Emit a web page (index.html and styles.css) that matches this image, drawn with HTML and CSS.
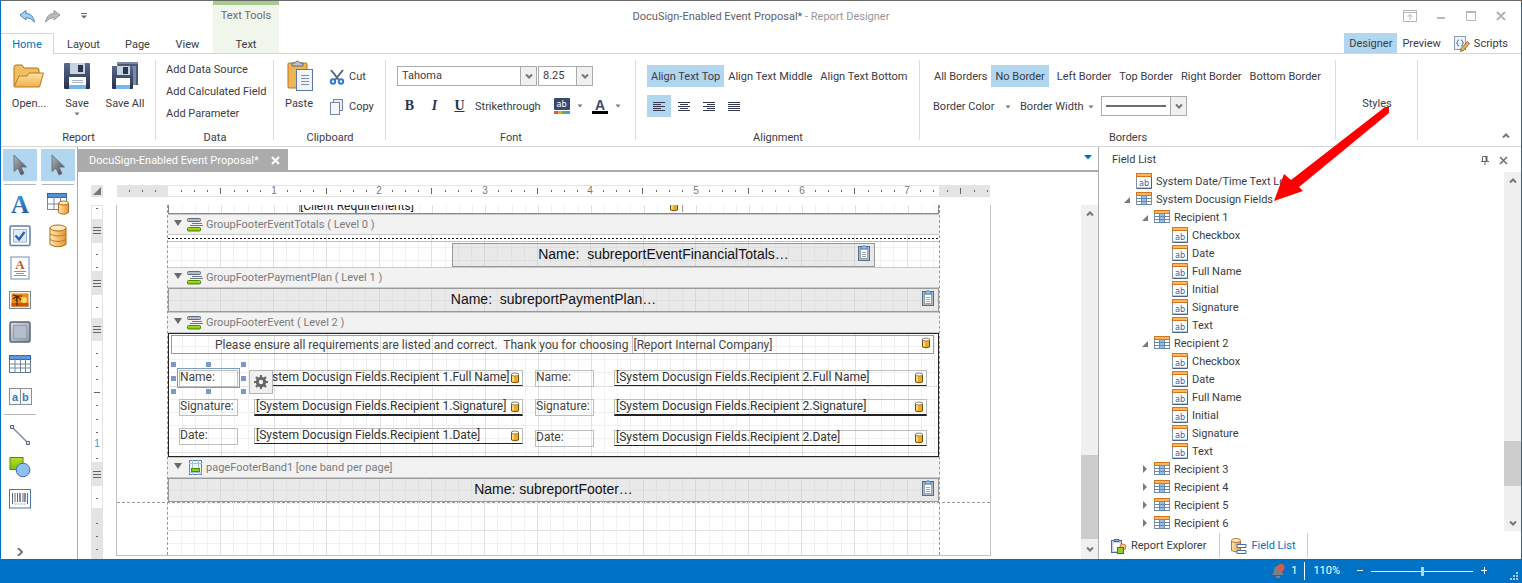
FILE: index.html
```html
<!DOCTYPE html>
<html lang="en">
<head>
<meta charset="utf-8">
<title>DocuSign-Enabled Event Proposal* - Report Designer</title>
<link rel="stylesheet" href="styles.css">
</head>
<body>
<svg class="defs" aria-hidden="true">
  <defs>
    <linearGradient id="gFolder" x1="0" y1="0" x2="0" y2="1"><stop offset="0" stop-color="#fde3a4"/><stop offset="1" stop-color="#f0b04a"/></linearGradient>
    <linearGradient id="gNavy" x1="0" y1="0" x2="0" y2="1"><stop offset="0" stop-color="#5a6a88"/><stop offset="1" stop-color="#27314d"/></linearGradient>
    <linearGradient id="gGold" x1="0" y1="0" x2="1" y2="0"><stop offset="0" stop-color="#fde9b5"/><stop offset="1" stop-color="#e8932d"/></linearGradient>
    <linearGradient id="gBlue" x1="0" y1="0" x2="0" y2="1"><stop offset="0" stop-color="#4ba0e8"/><stop offset="1" stop-color="#1d4f93"/></linearGradient>
    <linearGradient id="gGreen" x1="0" y1="0" x2="0" y2="1"><stop offset="0" stop-color="#b8e030"/><stop offset="1" stop-color="#7cc000"/></linearGradient>
    <linearGradient id="gSteel" x1="0" y1="0" x2="1" y2="1"><stop offset="0" stop-color="#d5dae2"/><stop offset="1" stop-color="#8e98a8"/></linearGradient>
    <linearGradient id="gCursor" x1="0" y1="0" x2="1" y2="1"><stop offset="0" stop-color="#b5b8bc"/><stop offset="1" stop-color="#404448"/></linearGradient>
  </defs>
  <symbol id="field" viewBox="0 0 16 16">
    <rect x=".5" y=".5" width="15" height="14.500" fill="#fff" stroke="#7f93ab"/>
    <path d="M15.500 4v11.500H.5" fill="none" stroke="#4d6480"/>
    <rect width="16" height="4" fill="#d9741a"/><rect x="1" y="1" width="14" height="2" fill="#fbb85f"/>
    <text x="3" y="13" class="glyph-ab">ab</text>
  </symbol>
  <symbol id="table" viewBox="0 0 16 16">
    <rect x=".5" y="2.500" width="15" height="11" fill="#fff" stroke="#7f93ab"/>
    <rect x="5" y="5" width="6" height="9" fill="#8fc0f5"/>
    <path d="M0 7.500h16M0 10.500h16M5.500 5v9M10.500 5v9M0 13.500h16" stroke="#6c87a8" fill="none"/>
    <rect y="1" width="16" height="4" fill="#d9741a"/><rect x="1" y="2" width="14" height="2" fill="#fbb85f"/>
  </symbol>
  <symbol id="open" viewBox="0 0 8 8"><path d="M7 2v6H1z" fill="#7a7a7a"/></symbol>
  <symbol id="closed" viewBox="0 0 8 8"><path d="M2 0l4 4-4 4z" fill="#7a7a7a"/></symbol>
  <symbol id="down" viewBox="0 0 8 8"><path d="M1 2.500l3 3 3-3" fill="none" stroke="#777" stroke-width="2"/></symbol>
  <symbol id="up" viewBox="0 0 8 8"><path d="M1 5.500l3-3 3 3" fill="none" stroke="#777" stroke-width="2"/></symbol>
  <symbol id="caret" viewBox="0 0 6 4"><path d="M.5 .5h5L3 3.500z" fill="#777"/></symbol>
  <symbol id="bandcaret" viewBox="0 0 8 7"><path d="M0 0h8L4 6z" fill="#6a6a6a"/></symbol>
  <symbol id="cursor" viewBox="0 0 16 22"><path d="M2 1v16.500l4-3.500 3 7 3-1.500-3-6.500h5.500z" fill="url(#gCursor)" stroke="#62676d" stroke-width=".8"/></symbol>
  <symbol id="db" viewBox="0 0 10 12"><path d="M1.500 2v8q3.500 1.500 7 0V2z" fill="#efab1c" stroke="#7a4a10"/><path d="M3 4v5.500" stroke="#fde9a0" stroke-width="1.500"/><ellipse cx="5" cy="2.500" rx="3.500" ry="1.500" fill="#fff" stroke="#7a6a50" stroke-width=".8"/></symbol>
  <symbol id="clip" viewBox="0 0 12 16"><rect x=".5" y="1.500" width="11" height="14" fill="#a9b9c9" stroke="#5c6c80"/><rect x="2.500" y="4" width="7" height="9.500" fill="#fff" stroke="#8797a8" stroke-width=".8"/><path d="M4 7.500h4M4 9.500h4M4 11.500h4" stroke="#8797a8" stroke-width=".8"/><path d="M3 1.500h1.500q1.500-2 3 0H9v2.500H3z" fill="#9cc4f0" stroke="#2f6cb8" stroke-width=".8"/></symbol>
  <symbol id="band" viewBox="0 0 16 14"><rect x=".5" y=".5" width="13" height="3" rx="1" fill="#b4bcc8" stroke="#5f6b7c"/><path d="M5 5.500h10M3 7.500h13" stroke="#6b7789"/><rect x=".5" y="9.500" width="13" height="3.500" rx="1" fill="url(#gGreen)" stroke="#4d8a00"/></symbol>
</svg>

<header class="titlebar">
  <div class="title-left">
    <nav class="quick" aria-label="Quick access">
      <button aria-label="Undo"><svg width="16" height="13" viewBox="0 0 16 13"><path d="M1 5l6-4.500v3q7 0 8.500 8.500Q12 7.500 7 7.500v2.500z" fill="#a9d0f0" stroke="#4282bd"/></svg></button>
      <button aria-label="Redo"><svg width="16" height="13" viewBox="0 0 16 13"><path d="M15 5L9 .5v3Q2 3.500.5 12 4 7.500 9 7.500v2.500z" fill="#b9b9b9" stroke="#989898"/></svg></button>
      <button aria-label="Customize"><svg width="6" height="6" viewBox="0 0 6 6"><path d="M0 .5h6" stroke="#666"/><path d="M0 2.500h6L3 5.500z" fill="#666"/></svg></button>
    </nav>
    <div class="context-title">Text Tools</div>
  </div>
  <h1 class="window-title">DocuSign-Enabled Event Proposal* <span>- Report Designer</span></h1>
  <div class="window-buttons">
    <button aria-label="Ribbon display"><svg width="14" height="12" viewBox="0 0 14 12"><path d="M.5.5h13v11H.5zM0 2.500h14M7 10V4.500M4.500 7L7 4.500 9.500 7" fill="none" stroke="#b5b5b5"/></svg></button>
    <button aria-label="Minimize"><svg width="12" height="12"><path d="M2 8h8" stroke="#b8b8b8" stroke-width="2"/></svg></button>
    <button aria-label="Maximize"><svg width="12" height="12"><path d="M1.500 1.500h9v9h-9z" fill="none" stroke="#b8b8b8"/><path d="M1 2h10" stroke="#b8b8b8" stroke-width="2"/></svg></button>
    <button aria-label="Close"><svg width="12" height="12"><path d="M2 2l8 8M10 2l-8 8" stroke="#b3b3b3" stroke-width="2"/></svg></button>
  </div>
</header>

<nav class="tabs">
  <button class="tab tab-active">Home</button>
  <button class="tab tab-layout">Layout</button>
  <button class="tab">Page</button>
  <button class="tab tab-view">View</button>
  <button class="tab tab-context">Text</button>
  <span class="spacer"></span>
  <button class="mode mode-on">Designer</button>
  <button class="mode">Preview</button>
  <button class="mode mode-scripts"><svg width="16" height="16" viewBox="0 0 16 16"><rect x=".5" y=".5" width="11" height="13" fill="#eef3fb" stroke="#8b9cba"/><path d="M5 4q-1.500 0-1.500 1.500T2.500 7q1 0 1 1.500T5 10M7 4q1.500 0 1.500 1.500T9.500 7q-1 0-1 1.500T7 10" fill="none" stroke="#4268a8"/><path d="M13.500 5.500l2 2-6 7-3 1 .8-3.200z" fill="#edb55a" stroke="#7a5220" stroke-width=".8"/></svg>Scripts</button>
</nav>

<section class="ribbon" aria-label="Ribbon">
  <div class="group">
    <div class="group-body report-body">
      <button class="big"><svg width="32" height="32" viewBox="0 0 32 32"><path d="M1 26V7q0-2 2-2h6l2 3h13q2 0 2 2v5" fill="#f4bd62" stroke="#b07318"/><path d="M1 27l5-11h8l2-3h14.500l-4 14z" fill="url(#gFolder)" stroke="#b87a1c"/></svg>Open...</button>
      <button class="big"><svg width="32" height="32" viewBox="0 0 32 32"><path d="M4 3h24q1 0 1 1v24q0 1-1 1H4q-1 0-1-1V4q0-1 1-1z" fill="url(#gNavy)"/><rect x="9" y="3" width="15" height="11" fill="#c9d2e0"/><rect x="17" y="5" width="5" height="7" fill="#2a3550"/><rect x="8" y="17" width="17" height="12" fill="#fff"/><rect x="8" y="25" width="17" height="4" fill="#77b6ea"/><path d="M11 20.500h11M11 22.500h11" stroke="#a9b5c6"/></svg>Save<svg class="caret" width="6" height="4"><use href="#caret"/></svg></button>
      <button class="big"><svg width="32" height="32" viewBox="0 0 32 32"><path d="M8 2h21v23H8z" fill="#7b8aa6"/><path d="M9 5h19v20" fill="none" stroke="#4b5977" stroke-width="2"/><path d="M3 6h19q2 0 2 2v20q0 1-1 1H4q-1 0-1-1z" fill="url(#gNavy)"/><rect x="8" y="6" width="13" height="9" fill="#c9d2e0"/><rect x="14" y="7" width="5" height="7" fill="#2a3550"/><rect x="7" y="18" width="14" height="11" fill="#fff"/><rect x="7" y="25" width="14" height="4" fill="#77b6ea"/></svg>Save All</button>
    </div>
    <div class="group-label">Report</div>
  </div>
  <div class="group">
    <div class="group-body data-body">
      <button>Add Data Source</button>
      <button>Add Calculated Field</button>
      <button>Add Parameter</button>
    </div>
    <div class="group-label">Data</div>
  </div>
  <div class="group">
    <div class="group-body clip-body">
      <button class="big"><svg width="32" height="32" viewBox="0 0 32 32"><rect x="5" y="3" width="19" height="25" rx="1" fill="#efb550" stroke="#b3761c"/><path d="M9 6V3h3q2-4 5 0h3v3z" fill="#b8c2d0" stroke="#5f6b80"/><rect x="13.500" y="9.500" width="16" height="21" fill="#f2f6fc" stroke="#5b79a8"/><path d="M18 15.500h8M18 18.500h8M18 21.500h8M18 24.500h8" stroke="#7d8fb3"/></svg>Paste</button>
      <div class="stack">
        <button><svg width="16" height="16" viewBox="0 0 16 16"><path d="M2 1l8 10M14 1L6 11" stroke="#56647e" stroke-width="2"/><circle cx="4" cy="12.500" r="2.200" fill="#fff" stroke="#2f7ad0" stroke-width="2"/><circle cx="12" cy="12.500" r="2.200" fill="#fff" stroke="#2f7ad0" stroke-width="2"/></svg>Cut</button>
        <button><svg width="16" height="16" viewBox="0 0 16 16"><rect x="4.500" y=".5" width="9" height="11" fill="#e9eff9" stroke="#7486ad"/><rect x="1.500" y="3.500" width="9" height="12" fill="#f6f9fe" stroke="#7486ad"/></svg>Copy</button>
      </div>
    </div>
    <div class="group-label">Clipboard</div>
  </div>
  <div class="group">
    <div class="group-body font-body">
      <div class="row combos">
        <div class="combo combo-font"><select aria-label="Font"><option>Tahoma</option></select><span class="combo-arrow"><svg width="10" height="8" viewBox="0 0 8 8"><use href="#down"/></svg></span></div>
        <div class="combo combo-size"><select aria-label="Font size"><option>8.25</option></select><span class="combo-arrow"><svg width="10" height="8" viewBox="0 0 8 8"><use href="#down"/></svg></span></div>
      </div>
      <div class="row font-row">
        <button class="style-b">B</button>
        <button class="style-i">I</button>
        <button class="style-u">U</button>
        <button class="strike">Strikethrough</button>
        <button class="split" aria-label="Background color"><svg width="16" height="16" viewBox="0 0 16 16"><rect width="16" height="12" rx="1" fill="#39486f"/><text x="2.500" y="9" class="glyph-white">ab</text><path d="M0 13h4v3H0z" fill="#e0574d"/><path d="M4 13h4v3H4z" fill="#f0a030"/><path d="M8 13h4v3H8z" fill="#72a82c"/><path d="M12 13h4v3h-4z" fill="#4a9be0"/></svg><svg class="caret" width="6" height="4"><use href="#caret"/></svg></button>
        <button class="split" aria-label="Font color"><svg width="16" height="16" viewBox="0 0 16 16"><text x="8" y="12" class="glyph-A">A</text><rect y="13" width="16" height="3"/></svg><svg class="caret" width="6" height="4"><use href="#caret"/></svg></button>
      </div>
    </div>
    <div class="group-label">Font</div>
  </div>
  <div class="group">
    <div class="group-body align-body">
      <div class="row">
        <button class="text-btn on">Align Text Top</button>
        <button class="text-btn">Align Text Middle</button>
        <button class="text-btn">Align Text Bottom</button>
      </div>
      <div class="row">
        <button class="icon-btn on" aria-label="Left"><svg width="12" height="9"><path d="M0 .5h12M0 2.500h8M0 4.500h12M0 6.500h8M0 8.500h12"/></svg></button>
        <button class="icon-btn" aria-label="Center"><svg width="12" height="9"><path d="M0 .5h12M2 2.500h8M0 4.500h12M2 6.500h8M0 8.500h12"/></svg></button>
        <button class="icon-btn" aria-label="Right"><svg width="12" height="9"><path d="M0 .5h12M4 2.500h8M0 4.500h12M4 6.500h8M0 8.500h12"/></svg></button>
        <button class="icon-btn" aria-label="Justify"><svg width="12" height="9"><path d="M0 .5h12M0 2.500h12M0 4.500h12M0 6.500h12M0 8.500h12"/></svg></button>
      </div>
    </div>
    <div class="group-label">Alignment</div>
  </div>
  <div class="group">
    <div class="group-body border-body">
      <div class="row">
        <button class="text-btn">All Borders</button>
        <button class="text-btn on">No Border</button>
        <button class="text-btn left-border">Left Border</button>
        <button class="text-btn">Top Border</button>
        <button class="text-btn">Right Border</button>
        <button class="text-btn">Bottom Border</button>
      </div>
      <div class="row">
        <button class="split-text color-btn">Border Color <svg class="caret" width="6" height="4"><use href="#caret"/></svg></button>
        <button class="split-text width-btn">Border Width <svg class="caret" width="6" height="4"><use href="#caret"/></svg></button>
        <div class="combo combo-line"><button class="line-sample" aria-label="Border style"><span></span></button><span class="combo-arrow"><svg width="10" height="8" viewBox="0 0 8 8"><use href="#down"/></svg></span></div>
      </div>
    </div>
    <div class="group-label">Borders</div>
  </div>
  <div class="group">
    <div class="group-body styles-body"><button>Styles</button></div>
  </div>
  <span class="spacer"></span>
  <button class="collapse" aria-label="Collapse ribbon"><svg width="10" height="8" viewBox="0 0 8 8"><use href="#up"/></svg></button>
</section>

<main class="main">
  <aside class="toolbox" aria-label="Toolbox">
    <div class="tool-col">
      <button class="tool on" aria-label="Pointer"><svg width="16" height="22"><use href="#cursor"/></svg></button>
      <hr>
      <button class="tool" aria-label="Label"><svg width="24" height="30" viewBox="0 0 24 30"><text x="12" y="24" class="glyph-label">A</text></svg></button>
      <button class="tool" aria-label="Check box"><svg width="22" height="22" viewBox="0 0 22 22"><rect x="1" y="1" width="20" height="19.500" rx="1.500" fill="#fff" stroke="#5c7ea8" stroke-width="1.500"/><rect x="4.500" y="4.500" width="13" height="12.500" fill="#dfe9f7" stroke="#9db5d6"/><path d="M6.500 10.500l3.500 4 5.500-7.500" fill="none" stroke="#2060b8" stroke-width="2.200"/></svg></button>
      <button class="tool" aria-label="Rich text"><svg width="20" height="24" viewBox="0 0 20 24"><rect x="1" y="1" width="18" height="22" fill="#fff" stroke="#6c8fb8"/><text x="10" y="13" class="glyph-rich">A</text><path d="M4 15.500h12M6 17.500h8M4 19.500h12" stroke="#7e95b5"/></svg></button>
      <button class="tool" aria-label="Picture box"><svg width="22" height="18" viewBox="0 0 22 18"><rect x=".5" y=".5" width="21" height="17" fill="#f3f3f3" stroke="#7c8796"/><rect x="2.500" y="2.500" width="17" height="13" fill="#e98a18"/><path d="M2.500 12h17v3.500h-17z" fill="#c9550e"/><circle cx="15" cy="9" r="3" fill="#ffd95c"/><path d="M8 5v10M8 5L4 8M8 5L4 4M8 5h5M8 5l4 4M8 5l-1 5" stroke="#5a2808" stroke-width="1.200" fill="none"/></svg></button>
      <button class="tool" aria-label="Panel"><svg width="22" height="22" viewBox="0 0 22 22"><rect x="1" y="1" width="20" height="20" rx="1.500" fill="url(#gSteel)" stroke="#596475" stroke-width="1.500"/><rect x="4.500" y="4.500" width="13" height="13" fill="#b5bdca" stroke="#949eae"/></svg></button>
      <button class="tool" aria-label="Table"><svg width="22" height="18" viewBox="0 0 22 18"><rect x=".5" y=".5" width="21" height="17" fill="#fff" stroke="#5d7594"/><rect x=".5" y=".5" width="21" height="4" fill="#5b9be5" stroke="#2f67ad"/><path d="M0 9h22M0 13h22M6 0v18M11.500 0v18M16.500 0v18" stroke="#6f87a5"/></svg></button>
      <button class="tool" aria-label="Character comb"><svg width="23" height="17" viewBox="0 0 23 17"><rect x=".5" y=".5" width="22" height="16" fill="#fafafa" stroke="#8b8f95"/><path d="M11.500 0v17" stroke="#8b8f95"/><text x="3" y="13" class="glyph-comb">a</text><text x="13" y="13" class="glyph-comb">b</text></svg></button>
      <hr class="hr-tight">
      <button class="tool" aria-label="Line"><svg width="22" height="22" viewBox="0 0 22 22"><path d="M3 3l16 16" stroke="#7c8898" stroke-width="1.500"/><path d="M1.500 1.500h3v3h-3zM17.500 17.500h3v3h-3z" fill="#d9e2ee" stroke="#56657c"/></svg></button>
      <button class="tool" aria-label="Shape"><svg width="22" height="22" viewBox="0 0 22 22"><rect x="1" y="1.500" width="13" height="12" fill="url(#gGreen)" stroke="#4d8f00"/><circle cx="14" cy="14" r="6.800" fill="#8fc0f3" stroke="#3a6db0"/></svg></button>
      <button class="tool" aria-label="Barcode"><svg width="22" height="20" viewBox="0 0 22 20"><rect x=".5" y=".5" width="21" height="18.500" fill="#fff" stroke="#4a76ad"/><path d="M3.500 4v11M6 4v9M8.500 4v9M14 4v9M18.500 4v11" stroke="#5b6778"/><path d="M11 4v9M16 4v9" stroke="#5b6778" stroke-width="1.500"/><path d="M5.500 15h11" stroke="#9aa3b0" stroke-dasharray="2 1"/></svg></button>
      <span class="spacer"></span>
      <button class="more" aria-label="More tools"><svg width="8" height="8" viewBox="0 0 8 8"><path d="M2 0l4 4-4 4" fill="none" stroke="#777" stroke-width="2"/></svg></button>
    </div>
    <div class="tool-col">
      <button class="tool on" aria-label="Pointer"><svg width="16" height="22"><use href="#cursor"/></svg></button>
      <hr>
      <button class="tool" aria-label="Bound table"><svg width="24" height="24" viewBox="0 0 24 24"><rect x="1.500" y="1.500" width="19" height="16" fill="#fff" stroke="#6d87a8"/><rect x="1.500" y="1.500" width="19" height="4" fill="#4c93e0" stroke="#2f67ad"/><path d="M1 12h20M8 1v17M14.500 1v17" stroke="#6d87a8"/><path d="M12.500 11v9.500q5 3.500 10 0V11z" fill="url(#gGold)" stroke="#b46a12"/><ellipse cx="17.500" cy="11" rx="5" ry="2" fill="#fdeac0" stroke="#b46a12"/></svg></button>
      <button class="tool" aria-label="Data source"><svg width="18" height="24" viewBox="0 0 18 24"><path d="M1 4v16.500q8 4.500 16 0V4z" fill="url(#gGold)" stroke="#b46a12"/><ellipse cx="9" cy="4" rx="8" ry="3" fill="#fdeac0" stroke="#b46a12"/><path d="M1 10q8 4 16 0M1 15.500q8 4 16 0" fill="none" stroke="#c57c25"/></svg></button>
    </div>
  </aside>

  <section class="document">
    <div class="doc-tabs">
      <button class="doc-tab">DocuSign-Enabled Event Proposal*<svg width="9" height="9"><path d="M1 1l7 7M8 1L1 8" stroke="#fff" stroke-width="2"/></svg></button>
      <span class="spacer"></span>
      <button class="doc-menu" aria-label="Documents"><svg width="8" height="5"><path d="M0 0h8L4 4.500z" fill="#0072c6"/></svg></button>
    </div>
    <div class="designer">
      <div class="corner"><svg width="8" height="8"><path d="M8 0v8H0z" fill="#777"/></svg></div>
      <svg class="ruler-h" width="873" height="12" aria-hidden="true">
        <defs><g id="inch"><path d="M13.500 5v2M26.500 5v2M39.500 5v2M66.500 5v2M79.500 5v2M92.500 5v2"/><path d="M52.500 3v6"/></g></defs>
        <rect width="873" height="12" fill="#e4e4e4"/><rect x="51" y="1" width="771" height="10" fill="#fff"/>
        <g stroke="#666"><path d="M12.500 5v2M25.500 5v2M38.500 5v2"/><use href="#inch" x="51"/><use href="#inch" x="157"/><use href="#inch" x="262"/><use href="#inch" x="368"/><use href="#inch" x="473"/><use href="#inch" x="579"/><use href="#inch" x="685"/><path d="M803.500 5v2M816.500 5v2M830.500 5v2M843.500 3v6M857.500 5v2M870.500 5v2"/></g>
        <g class="ruler-num"><text x="157" y="9">1</text><text x="262" y="9">2</text><text x="368" y="9">3</text><text x="473" y="9">4</text><text x="579" y="9">5</text><text x="685" y="9">6</text><text x="790" y="9">7</text></g>
      </svg>
      <svg class="ruler-v" width="12" height="354" aria-hidden="true">
        <rect width="12" height="354" fill="#e4e4e4"/>
        <g fill="#fff"><path d="M1 1h10v13H1zM1 38h10v28H1zM1 90h10v23H1zM1 136h10v121H1zM1 281h10v22H1z"/></g>
        <g stroke="#666"><path d="M5 3.500h2M5 49.500h2M5 62.500h2M5 102.500h2M5 148.500h2M5 161.500h2M5 174.500h2M3 187.500h6M5 200.500h2M5 214.500h2M5 227.500h2M5 253.500h2M5 293.500h2M5 318.500h2M5 331.500h2M5 344.500h2"/><path d="M2 22.500h8M2 25.500h8M2 28.500h8M2 75.500h8M2 78.500h8M2 81.500h8M2 121.500h8M2 124.500h8M2 127.500h8M2 266.500h8M2 269.500h8M2 272.500h8"/></g>
        <g class="ruler-num blue"><text x="6" y="242">1</text></g>
      </svg>
      <div class="viewport">
        <div class="page">
          <div class="bands">
            <div class="band-area grid-bg band-tail">
              <div class="tail-cell"><span>[Client Requirements]</span><svg width="10" height="12"><use href="#db"/></svg></div>
            </div>
            <div class="band-head"><svg class="fold" width="8" height="7"><use href="#bandcaret"/></svg><svg width="16" height="14"><use href="#band"/></svg>GroupFooterEventTotals ( Level 0 )</div>
            <div class="band-area grid-bg band-totals">
              <div class="dots"></div>
              <div class="subreport sub-totals"><span>Name:&nbsp; subreportEventFinancialTotals…</span><svg width="12" height="16"><use href="#clip"/></svg></div>
            </div>
            <div class="band-head"><svg class="fold" width="8" height="7"><use href="#bandcaret"/></svg><svg width="16" height="14"><use href="#band"/></svg>GroupFooterPaymentPlan ( Level 1 )</div>
            <div class="band-area grid-bg">
              <div class="subreport"><span>Name:&nbsp; subreportPaymentPlan…</span><svg width="12" height="16"><use href="#clip"/></svg></div>
            </div>
            <div class="band-head"><svg class="fold" width="8" height="7"><use href="#bandcaret"/></svg><svg width="16" height="14"><use href="#band"/></svg>GroupFooterEvent ( Level 2 )</div>
            <div class="band-area grid-bg band-event">
              <div class="ctl note"><span>Please ensure all requirements are listed and correct.&nbsp; Thank you for choosing</span><span class="company">[Report Internal Company]</span><svg width="10" height="12"><use href="#db"/></svg></div>
              <div class="ctl lbl col1 row1">Name:</div>
              <div class="ctl val col2 row1">[System Docusign Fields.Recipient 1.Full Name]<svg width="10" height="12"><use href="#db"/></svg></div>
              <div class="ctl lbl col3 row1">Name:</div>
              <div class="ctl val col4 row1">[System Docusign Fields.Recipient 2.Full Name]<svg width="10" height="12"><use href="#db"/></svg></div>
              <div class="ctl lbl col1 row2">Signature:</div>
              <div class="ctl val thick col2 row2">[System Docusign Fields.Recipient 1.Signature]<svg width="10" height="12"><use href="#db"/></svg></div>
              <div class="ctl lbl col3 row2">Signature:</div>
              <div class="ctl val thick col4 row2">[System Docusign Fields.Recipient 2.Signature]<svg width="10" height="12"><use href="#db"/></svg></div>
              <div class="ctl lbl col1 row3">Date:</div>
              <div class="ctl val col2 row3">[System Docusign Fields.Recipient 1.Date]<svg width="10" height="12"><use href="#db"/></svg></div>
              <div class="ctl lbl col3 row3-right">Date:</div>
              <div class="ctl val col4 row3-right">[System Docusign Fields.Recipient 2.Date]<svg width="10" height="12"><use href="#db"/></svg></div>
              <svg class="selection" width="76" height="32" aria-hidden="true"><rect x="6.500" y="6.500" width="62" height="19" fill="none" stroke="#7a9bc6"/><path d="M0 0h5v5H0zM35 0h5v5h-5zM70 0h5v5h-5zM0 14h5v5H0zM70 14h5v5h-5zM0 27h5v5H0zM35 27h5v5h-5zM70 27h5v5h-5z" fill="#7a9bc6"/></svg>
              <button class="smart" aria-label="Tasks"><svg width="16" height="16" viewBox="0 0 16 16"><circle cx="8" cy="8" r="3.700" fill="none" stroke="#666" stroke-width="3"/><path d="M8 1v3M8 12v3M1 8h3M12 8h3M3 3l2 2M11 11l2 2M13 3l-2 2M5 11l-2 2" stroke="#666" stroke-width="2.200"/></svg></button>
            </div>
            <div class="band-head"><svg class="fold" width="8" height="7"><use href="#bandcaret"/></svg><svg width="16" height="15" viewBox="0 0 16 15"><g transform="translate(2 0)"><rect x=".5" y=".5" width="12" height="14" fill="#eef4fb" stroke="#5b87bd"/><path d="M3.500 0v15M9.500 0v15M0 3.500h13M0 12.500h13" stroke="#a3c0e3"/><rect x="2.500" y="8.500" width="8" height="3" fill="#8fce18" stroke="#4d8a00"/></g></svg>pageFooterBand1 [one band per page]</div>
            <div class="band-area grid-bg band-footer">
              <div class="subreport"><span>Name: subreportFooter…</span><svg width="12" height="16"><use href="#clip"/></svg></div>
            </div>
          </div>
        </div>
      </div>
      <div class="scroll">
        <button aria-label="Scroll up"><svg width="10" height="8" viewBox="0 0 8 8"><use href="#up"/></svg></button>
        <span class="track"></span><span class="thumb doc-thumb"></span>
        <button class="scroll-end" aria-label="Scroll down"><svg width="10" height="8" viewBox="0 0 8 8"><use href="#down"/></svg></button>
      </div>
    </div>
  </section>

  <aside class="fields">
    <div class="panel-head"><h2>Field List</h2><span class="spacer"></span>
      <button aria-label="Pin"><svg width="8" height="9"><path d="M1.500 5V.5h4V5M0 5.500h8M4 6v3" fill="none" stroke="#666"/><path d="M5.500 0v5" stroke="#666" stroke-width="2"/></svg></button>
      <button aria-label="Close panel"><svg width="9" height="9"><path d="M1 1l7 7M8 1L1 8" stroke="#707070" stroke-width="1.600"/></svg></button>
    </div>
    <div class="tree-wrap">
      <ul class="tree">
        <li><div class="node"><span class="exp"></span><svg width="16" height="16"><use href="#field"/></svg>System Date/Time Text Long</div></li>
        <li><div class="node"><svg class="exp" width="8" height="8"><use href="#open"/></svg><svg width="16" height="16"><use href="#table"/></svg>System Docusign Fields</div>
          <ul>
            <li><div class="node"><svg class="exp" width="8" height="8"><use href="#open"/></svg><svg width="16" height="16"><use href="#table"/></svg>Recipient 1</div>
              <ul>
                <li><div class="node"><span class="exp"></span><svg width="16" height="16"><use href="#field"/></svg>Checkbox</div></li>
                <li><div class="node"><span class="exp"></span><svg width="16" height="16"><use href="#field"/></svg>Date</div></li>
                <li><div class="node"><span class="exp"></span><svg width="16" height="16"><use href="#field"/></svg>Full Name</div></li>
                <li><div class="node"><span class="exp"></span><svg width="16" height="16"><use href="#field"/></svg>Initial</div></li>
                <li><div class="node"><span class="exp"></span><svg width="16" height="16"><use href="#field"/></svg>Signature</div></li>
                <li><div class="node"><span class="exp"></span><svg width="16" height="16"><use href="#field"/></svg>Text</div></li>
              </ul></li>
            <li><div class="node"><svg class="exp" width="8" height="8"><use href="#open"/></svg><svg width="16" height="16"><use href="#table"/></svg>Recipient 2</div>
              <ul>
                <li><div class="node"><span class="exp"></span><svg width="16" height="16"><use href="#field"/></svg>Checkbox</div></li>
                <li><div class="node"><span class="exp"></span><svg width="16" height="16"><use href="#field"/></svg>Date</div></li>
                <li><div class="node"><span class="exp"></span><svg width="16" height="16"><use href="#field"/></svg>Full Name</div></li>
                <li><div class="node"><span class="exp"></span><svg width="16" height="16"><use href="#field"/></svg>Initial</div></li>
                <li><div class="node"><span class="exp"></span><svg width="16" height="16"><use href="#field"/></svg>Signature</div></li>
                <li><div class="node"><span class="exp"></span><svg width="16" height="16"><use href="#field"/></svg>Text</div></li>
              </ul></li>
            <li><div class="node"><svg class="exp" width="8" height="8"><use href="#closed"/></svg><svg width="16" height="16"><use href="#table"/></svg>Recipient 3</div></li>
            <li><div class="node"><svg class="exp" width="8" height="8"><use href="#closed"/></svg><svg width="16" height="16"><use href="#table"/></svg>Recipient 4</div></li>
            <li><div class="node"><svg class="exp" width="8" height="8"><use href="#closed"/></svg><svg width="16" height="16"><use href="#table"/></svg>Recipient 5</div></li>
            <li><div class="node"><svg class="exp" width="8" height="8"><use href="#closed"/></svg><svg width="16" height="16"><use href="#table"/></svg>Recipient 6</div></li>
          </ul></li>
      </ul>
      <div class="scroll">
        <button aria-label="Scroll up"><svg width="10" height="8" viewBox="0 0 8 8"><use href="#up"/></svg></button>
        <span class="track tree-track"></span><span class="thumb tree-thumb"></span><span class="track"></span>
        <button aria-label="Scroll down"><svg width="10" height="8" viewBox="0 0 8 8"><use href="#down"/></svg></button>
      </div>
    </div>
    <div class="panel-tabs">
      <button><svg width="16" height="16" viewBox="0 0 16 16"><rect x=".5" y="2.500" width="10" height="12" fill="#c9d3e2" stroke="#54698c"/><path d="M3 3.500V1.500h5v2z" fill="#9cb6dc" stroke="#3f68a5"/><rect x="2.500" y="5" width="6" height="8" fill="#fff"/><circle cx="12" cy="9" r="3" fill="#f3c58a" stroke="#d5812a"/><rect x="6.500" y="9.500" width="6" height="6" fill="#8fcf2c" stroke="#3f7d10"/></svg>Report Explorer</button>
      <button class="current"><svg width="16" height="16" viewBox="0 0 16 16"><path d="M.5 2.500v10q4.500 3 9 0v-10z" fill="url(#gGold)" stroke="#b9772a"/><ellipse cx="5" cy="2.500" rx="4.500" ry="2" fill="#fdeac8" stroke="#b9772a"/><path d="M6 6.500h9v3H6zM6 12.500h9v3H6z" fill="#fff" stroke="#3f6db5"/></svg>Field List</button>
    </div>
  </aside>
</main>

<footer class="status">
  <svg width="14" height="14" viewBox="0 0 14 14"><path d="M1 11q2-2 2-5 0-4 4-4t4 4q0 3 2 5zM5 12h4v2H5z" fill="#7a7f88"/><circle cx="10" cy="3.500" r="3.500" fill="#dc5c42"/></svg>
  <span class="count">1</span>
  <span class="bar"></span>
  <span class="pct">110%</span>
  <button aria-label="Zoom out"><svg width="8" height="8"><path d="M1 3.500h6" stroke="#fff"/></svg></button>
  <input class="zoom" type="range" min="0" max="100" value="50" aria-label="Zoom">
  <button aria-label="Zoom in"><svg width="8" height="8"><path d="M1 3.500h6M4.500 0v7" stroke="#fff"/></svg></button>
  <svg class="grip" width="8" height="8"><path d="M6 0h2v2H6zM3 3h2v2H3zM6 3h2v2H6zM0 6h2v2H0zM3 6h2v2H3zM6 6h2v2H6z" fill="#a6cbe8"/></svg>
</footer>

<svg class="callout" width="116" height="96" viewBox="0 0 116 96" aria-hidden="true"><path d="M112 2h4v6L26 82l4 4-29 10 10-27 7 6z" fill="#f00"/></svg>
</body>
</html>
```
FILE: styles.css
```css
* { box-sizing: border-box; }
html, body { height: 100%; margin: 0; }
body {
  display: flex; flex-direction: column; position: relative; overflow: hidden;
  font: 11px/16px Roboto, "Noto Sans", sans-serif; color: #3b3b44; background: #fff;
  border-top: 1px solid #6a6a6a; border-left: 1px solid #0072c6; border-right: 1px solid #0072c6;
}
button { font: inherit; color: inherit; background: none; border: 0; padding: 0; margin: 0; white-space: nowrap; display: flex; align-items: center; justify-content: center; flex: none; }
svg { display: block; flex: none; }
h1, h2 { font: inherit; margin: 0; }
ul { list-style: none; margin: 0; padding: 0; }
.defs { position: absolute; width: 0; height: 0; }
.spacer { flex: 1; }
.glyph-ab { font: 9px "DejaVu Sans Condensed", sans-serif; fill: #2468b8; }
.glyph-white { font: 9px "DejaVu Sans Condensed", sans-serif; fill: #fff; }
.glyph-A { font: bold 14px "Liberation Sans", sans-serif; fill: #39486f; text-anchor: middle; }
.glyph-label { font: bold 25px "Liberation Serif", serif; fill: url(#gBlue); text-anchor: middle; }
.glyph-rich { font: bold 13px "Liberation Serif", serif; fill: #d2521c; text-anchor: middle; }
.glyph-comb { font: bold 11px "Liberation Sans", sans-serif; fill: #3b7cc4; }

/* title bar */
.titlebar { display: grid; grid-template-columns: 1fr auto 1fr; height: 32px; flex: none; }
.title-left { display: flex; }
.quick { width: 212px; display: flex; align-items: center; padding: 0 0 2px 18px; gap: 10px; }
.quick button:last-child { margin-left: 10px; }
.context-title { width: 66px; background: #f0f6ec; border-top: 4px solid #a9cc8e; color: #6b6b72; text-align: center; line-height: 22px; }
.window-title { align-self: center; color: #5f5f66; }
.window-title span { color: #97979c; }
.window-buttons { display: flex; justify-content: flex-end; align-items: center; gap: 18px; padding: 0 14px 2px 0; }

/* tabs */
.tabs { display: flex; height: 21px; flex: none; border-bottom: 1px solid #d5d5d5; }
.tab { height: 20px; width: 49px; padding-top: 4px; }
.tab-active { width: 53px; height: 21px; padding-top: 2px; border: 1px solid #d5d5d5; border-bottom: 0; border-left: 0; background: #fff; color: #0072c6; }
.tab-layout { width: 59px; }
.tab-view { width: 51px; }
.tab-context { width: 66px; background: #f0f6ec; }
.mode { height: 20px; padding: 2px 5px 0; gap: 4px; }
.mode-on { background: #b1d6f0; }
.mode-scripts { margin-left: 3px; padding-right: 13px; }

/* ribbon */
.ribbon { display: flex; height: 93px; flex: none; border-bottom: 1px solid #d5d5d5; }
.group { display: flex; flex-direction: column; flex: none; background: linear-gradient(#dcdcdc, #dcdcdc) right 6px / 1px 80px no-repeat; }
.group-body { height: 75px; }
.group-label { text-align: center; padding-top: 1px; }
.row { display: flex; height: 22px; align-items: center; }
.big { flex-direction: column; justify-content: flex-start; padding-top: 6px; width: 48px; height: 75px; }
.big > svg:first-child { margin-bottom: 4px; }
.report-body { display: flex; padding: 0 7px 0 4px; }
.data-body { display: flex; flex-direction: column; align-items: flex-start; padding: 5px 0 0 10px; width: 118px; }
.data-body button { height: 22px; }
.clip-body { display: flex; padding-left: 1px; width: 112px; }
.stack { display: flex; flex-direction: column; padding: 8px 0 0 6px; align-items: flex-start; }
.stack button { height: 30px; gap: 4px; }
.font-body { padding: 11px 0 0 11px; width: 250px; }
.font-body .row + .row, .align-body .row + .row, .border-body .row + .row { margin-top: 8px; }
.combos { gap: 1px; }
.combo { display: flex; height: 20px; border: 1px solid #ababab; background: #fff; }
.combo select { flex: 1; min-width: 0; appearance: none; border: 0; background: #fff; font: inherit; color: inherit; padding: 0 4px; }
.combo-arrow { width: 16px; border-left: 1px solid #ababab; background: #f0f0f0; display: flex; align-items: center; justify-content: center; }
.combo-font { width: 140px; }
.combo-size { width: 55px; }
.combo-line { width: 86px; }
.line-sample { flex: 1; padding: 0 4px; }
.line-sample span { flex: 1; height: 2px; background: #6d6d6d; }
.style-b, .style-i, .style-u { font: bold 14px "Liberation Serif", serif; width: 25px; height: 22px; color: #2b3550; }
.style-i { font-style: italic; }
.style-u { text-decoration: underline; }
.strike { width: 82px; height: 22px; justify-content: flex-start; padding: 2px 0 0 3px; }
.split { gap: 7px; margin-right: 9px; }
.align-body { padding: 11px 0 0 11px; width: 284px; }
.border-body { padding: 11px 0 0 10px; width: 416px; }
.text-btn { height: 22px; padding: 2px 4px 0; }
.left-border { margin-left: 4px; }
.icon-btn { width: 24px; height: 22px; margin-right: 1px; }
.icon-btn path { stroke: #33384a; shape-rendering: crispEdges; }
.on { background: #b1d6f0; }
.split-text { height: 22px; padding: 2px 3px 0; justify-content: space-between; }
.color-btn { width: 84px; }
.width-btn { width: 80px; margin: 0 4px 0 3px; }
.styles-body { width: 82px; display: flex; justify-content: center; padding-top: 24px; }
.collapse { align-self: flex-end; margin: 0 10px 6px 0; }

/* workspace */
.main { flex: 1; min-height: 0; display: flex; }
.toolbox { display: flex; gap: 4px; padding: 2px 2px 0; width: 77px; border-right: 1px solid #ababab; flex: none; }
.tool-col { width: 34px; display: flex; flex-direction: column; align-items: stretch; }
.tool { height: 32px; }
.tool-col hr { width: 32px; margin: 3px 1px; border: 0; border-top: 1px solid #b5b5b5; }
.tool-col .hr-tight { margin: 2px 1px 4px; }
.more { margin-bottom: 3px; }
.document { flex: 1; min-width: 0; display: flex; flex-direction: column; border-right: 1px solid #ababab; }
.doc-tabs { display: flex; height: 25px; padding-top: 2px; border-bottom: 2px solid #ababab; flex: none; align-items: stretch; }
.doc-tab { background: #ababab; color: #fff; padding: 2px 8px 0 11px; gap: 12px; }
.doc-menu { margin-right: 6px; margin-bottom: 4px; }
.designer { flex: 1; min-height: 0; display: grid; grid-template: 12px 1fr / 12px 1fr 17px; column-gap: 13px; row-gap: 8px; padding: 13px 0 0 13px; }
.corner { background: #e4e4e4; display: flex; align-items: center; justify-content: center; }
.ruler-h { grid-column: 2 / 4; margin-left: 1px; shape-rendering: crispEdges; }
.ruler-v { shape-rendering: crispEdges; }
.ruler-num { font: 10px "Liberation Sans", sans-serif; fill: #777; text-anchor: middle; }
.blue { fill: #4a90d0; }
.viewport { overflow: hidden; min-width: 0; }
.page { width: 875px; height: 351px; border: 1px solid #c2c2c2; border-top: 0; background: linear-gradient(90deg, #999 60%, transparent 0) 0 297px / 5px 1px repeat-x; }
.bands { width: 773px; height: 350px; margin-left: 50px; border: dashed #999; border-width: 0 1px; display: flex; flex-direction: column; }
.grid-bg {
  --major: #e0e0e0; --minor: #f1f1f1;
  background-image:
    linear-gradient(90deg, transparent 52px, var(--major) 52px 53px, transparent 53px 105px, var(--major) 105px 106px, transparent 106px 158px, var(--major) 158px 159px, transparent 159px 211px, var(--major) 211px 212px, transparent 212px 263px, var(--major) 263px),
    linear-gradient(90deg, transparent 13px, var(--minor) 13px 14px, transparent 14px 26px, var(--minor) 26px 27px, transparent 27px 39px, var(--minor) 39px 40px, transparent 40px 52px, var(--minor) 52px 53px, transparent 53px 65px, var(--minor) 65px),
    linear-gradient(transparent 12px, var(--minor) 12px 13px, transparent 13px 25px, var(--minor) 25px 26px, transparent 26px 38px, var(--minor) 38px 39px, transparent 39px 52px, var(--major) 52px 53px, transparent 53px 65px, var(--minor) 65px);
  background-size: 264px 264px, 66px 66px, 66px 66px;
}
.band-area { position: relative; flex: none; }
.band-head { height: 21px; flex: none; background: #f2f2f2; border: solid #c8c8c8; border-width: 1px 0; display: flex; align-items: center; padding-left: 6px; color: #7a7a7a; line-height: 18px; }
.band-head svg { margin-right: 3px; }
.band-head .fold { margin: 0 5px 3px 0; }
.band-tail { height: 9px; border: 1px solid #888; border-top: 0; overflow: hidden; }
.tail-cell { position: absolute; left: 130px; bottom: 1px; width: 384px; height: 20px; border: solid #999; border-width: 0 1px; display: flex; justify-content: space-between; align-items: flex-end; padding-right: 3px; font-size: 12px; line-height: 12px; color: #222; }
.band-totals { height: 32px; }
.dots { height: 7px; border-bottom: 1px solid #c0c0c0; background: linear-gradient(90deg, #111 50%, transparent 0) 0 3px / 4px 1px repeat-x; }
.subreport { position: relative; height: 24px; border: 1px solid #999; background: rgba(200, 200, 200, .4); display: flex; align-items: center; justify-content: center; font: 14px/20px "Liberation Sans", sans-serif; color: #111; padding-bottom: 2px; }
.subreport svg { position: absolute; right: 4px; top: 1px; }
.sub-totals { position: absolute; left: 284px; top: 8px; width: 423px; }
.band-event { height: 124px; border: 1px solid #222; }
.band-footer { flex: 1; }
.ctl { position: absolute; font-size: 12px; line-height: 13px; white-space: pre; color: #444; border: 1px solid #bdbdbd; height: 17px; }
.note { left: 2px; top: 1px; width: 763px; height: 19px; border-color: #999; line-height: 18px; padding-left: 43px; display: flex; }
.company { margin-left: 4px; border-left: 1px solid #bdbdbd; }
.note svg, .val svg { position: absolute; right: 2px; top: 1px; }
.lbl { width: 59px; }
.val { height: 16px; border-bottom-color: #222; color: #333; padding-left: 1px; }
.thick { height: 17px; border-bottom-width: 2px; }
.col1 { left: 10px; } .col2 { left: 85px; width: 269px; } .col3 { left: 366px; } .col4 { left: 445px; width: 313px; }
.row1 { top: 36px; } .row2 { top: 65px; } .row3 { top: 94px; } .row3-right { top: 96px; }
.selection { position: absolute; left: 2px; top: 28px; }
.smart { position: absolute; left: 80px; top: 36px; width: 24px; height: 24px; background: #f0f0f0; border: 1px solid #b5b5b5; }

.scroll { width: 17px; background: #f0f0f0; display: flex; flex-direction: column; flex: none; }
.scroll button { height: 17px; }
.scroll .scroll-end { height: 20px; }
.thumb { background: #cdcdcd; }
.track { flex: 1; }
.doc-thumb { height: 84px; }
.tree-track { flex: 9; }
.tree-thumb { height: 45px; }

/* field list */
.fields { width: 422px; flex: none; display: flex; flex-direction: column; }
.panel-head { height: 25px; display: flex; align-items: center; padding: 1px 13px 0; gap: 10px; flex: none; }
.tree-wrap { flex: 1; min-height: 0; display: flex; }
.tree { flex: 1; padding-left: 24px; overflow: hidden; }
.tree ul { padding-left: 18px; }
.node { display: flex; align-items: center; height: 18px; padding-top: 2px; white-space: nowrap; }
.node svg { margin-bottom: 2px; }
.node svg + svg, .node span + svg { margin: 0 4px 2px 5px; }
.exp { width: 8px; flex: none; }
.panel-tabs { height: 28px; display: flex; flex: none; padding: 2px 0 1px; }
.panel-tabs button { padding: 0 13px 0 12px; gap: 4px; border-right: 1px solid #d0d0d0; }
.panel-tabs .current { color: #0072c6; padding: 0 12px 0 11px; }

/* status bar */
.status { height: 24px; flex: none; background: #0072c6; color: #fff; display: flex; align-items: center; justify-content: flex-end; padding-right: 3px; }
.count { margin: 0 7px 0 6px; }
.bar { width: 1px; height: 18px; background: #fff; }
.pct { margin: 0 16px 0 8px; }
.zoom { appearance: none; width: 102px; height: 12px; margin: 0 7px; background: linear-gradient(#fff, #fff) center / 100% 1px no-repeat; }
.zoom::-webkit-slider-thumb { appearance: none; width: 3px; height: 9px; background: #b1d6f0; }
.grip { align-self: flex-end; margin: 0 0 3px 22px; }

.callout { position: absolute; left: 1272px; top: 104px; pointer-events: none; }
```
